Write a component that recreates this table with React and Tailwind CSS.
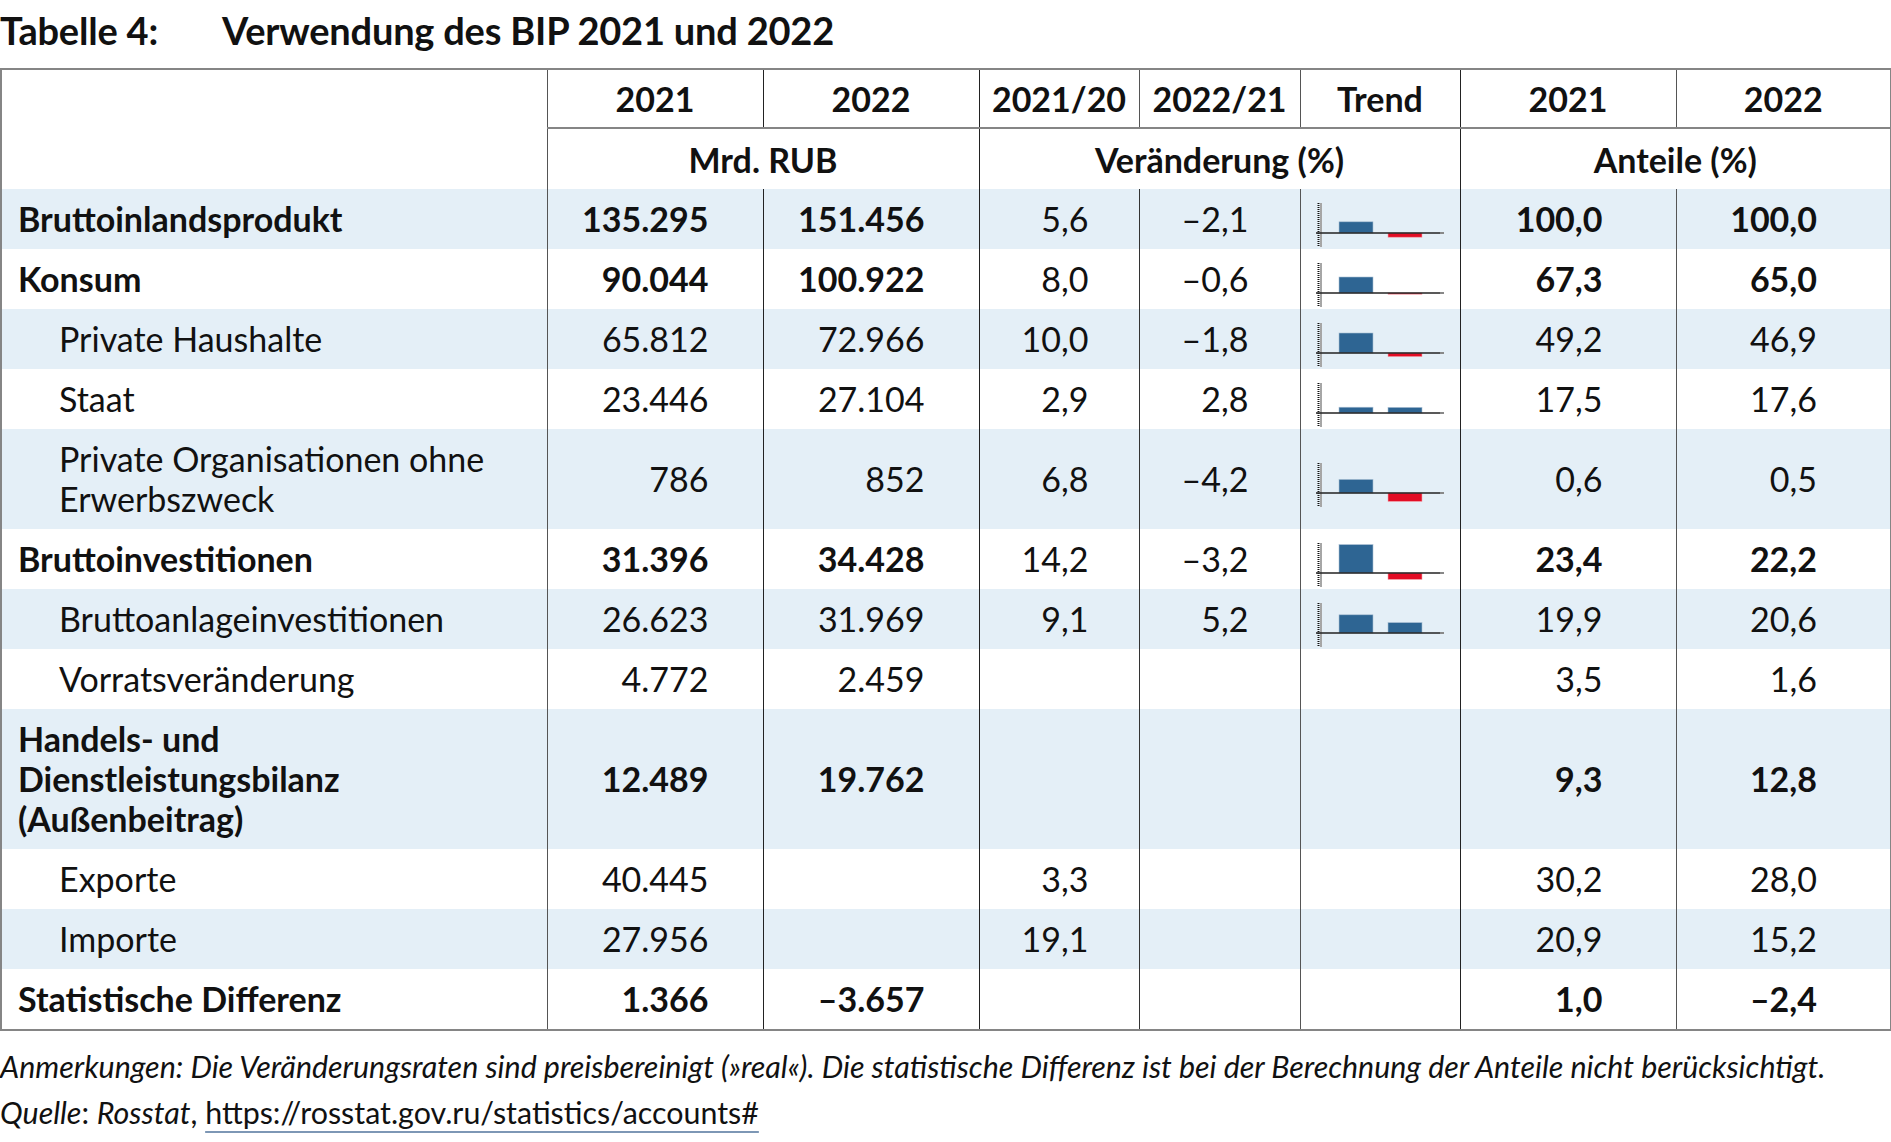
import React from "react";

const rows = [
  { label: "Bruttoinlandsprodukt", bold: true, shade: true, a: "135.295", b: "151.456", v1: "5,6", v2: "–2,1", t: [5.6, -2.1], s1: "100,0", s2: "100,0" },
  { label: "Konsum", bold: true, a: "90.044", b: "100.922", v1: "8,0", v2: "–0,6", t: [8.0, -0.6], s1: "67,3", s2: "65,0" },
  { label: "Private Haushalte", shade: true, a: "65.812", b: "72.966", v1: "10,0", v2: "–1,8", t: [10.0, -1.8], s1: "49,2", s2: "46,9" },
  { label: "Staat", a: "23.446", b: "27.104", v1: "2,9", v2: "2,8", t: [2.9, 2.8], s1: "17,5", s2: "17,6" },
  { label: ["Private Organisationen ohne", "Erwerbszweck"], shade: true, a: "786", b: "852", v1: "6,8", v2: "–4,2", t: [6.8, -4.2], s1: "0,6", s2: "0,5" },
  { label: "Bruttoinvestitionen", bold: true, a: "31.396", b: "34.428", v1: "14,2", v2: "–3,2", t: [14.2, -3.2], s1: "23,4", s2: "22,2" },
  { label: "Bruttoanlageinvestitionen", shade: true, a: "26.623", b: "31.969", v1: "9,1", v2: "5,2", t: [9.1, 5.2], s1: "19,9", s2: "20,6" },
  { label: "Vorratsveränderung", a: "4.772", b: "2.459", s1: "3,5", s2: "1,6" },
  { label: ["Handels- und", "Dienstleistungsbilanz", "(Außenbeitrag)"], bold: true, shade: true, a: "12.489", b: "19.762", s1: "9,3", s2: "12,8" },
  { label: "Exporte", a: "40.445", v1: "3,3", s1: "30,2", s2: "28,0" },
  { label: "Importe", shade: true, a: "27.956", v1: "19,1", s1: "20,9", s2: "15,2" },
  { label: "Statistische Differenz", bold: true, a: "1.366", b: "–3.657", s1: "1,0", s2: "–2,4" },
];

// small bar chart in the "Trend" column, 2px per percent
function Trend({ t }) {
  const base = 44;
  const bar = (x, v) =>
    v >= 0 ? (
      <rect x={x} y={base - v * 2} width="34" height={v * 2} fill="#2e6593" stroke="#a9bfd3" strokeWidth="0.6" />
    ) : (
      <rect x={x} y={base} width="34" height={-v * 2} fill="#e30d25" stroke="#f2a3ab" strokeWidth="0.6" />
    );
  return (
    <svg width="160" height="60" viewBox="0 0 160 60" className="block">
      <rect x="19" y="14" width="2" height="44" fill="#a6a6a6" />
      <line x1="17.5" y1="14" x2="17.5" y2="58" stroke="#111" strokeWidth="2" strokeDasharray="1 1" />
      {bar(38, t[0])}
      {bar(87, t[1])}
      <line x1="15" y1={base} x2="143" y2={base} stroke="#222" strokeWidth="1.5" />
      <line x1="139" y1={base} x2="143" y2={base} stroke="#888" strokeWidth="2" />
    </svg>
  );
}

export default function App() {
  const num = "text-right align-middle py-[10px] leading-[40px]";
  return (
    <div className="w-[1891px] bg-white text-[#111] font-['Lato',sans-serif]">
      <h1 className="h-[60px] leading-[60px] text-[38px] font-bold tracking-[-0.2px]">
        <span className="inline-block w-[222px]">Tabelle 4:</span>
        Verwendung des BIP 2021 und 2022
      </h1>

      <table className="mt-[8px] w-[1890px] table-fixed border-collapse text-[34px] border-t-2 border-b-2 border-l-2 border-r-2 border-[#858585]">
        <colgroup>
          <col className="w-[546px]" />
          <col className="w-[216px]" />
          <col className="w-[216px]" />
          <col className="w-[160px]" />
          <col className="w-[161px]" />
          <col className="w-[160px]" />
          <col className="w-[216px]" />
          <col className="w-[215px]" />
        </colgroup>
        <thead>
          <tr className="h-[59px] font-bold">
            <th rowSpan={2} className="border-r border-[#555]"></th>
            <th className="border-r border-b-2 border-b-[#858585] border-r-[#222] text-center">2021</th>
            <th className="border-r border-b-2 border-b-[#858585] border-r-[#222] text-center">2022</th>
            <th className="border-r border-b-2 border-b-[#858585] border-r-[#555] text-center">2021/20</th>
            <th className="border-r border-b-2 border-b-[#858585] border-r-[#555] text-center">2022/21</th>
            <th className="border-r border-b-2 border-b-[#858585] border-r-[#222] text-center">Trend</th>
            <th className="border-r border-b-2 border-b-[#858585] border-r-[#555] text-center">2021</th>
            <th className="border-b-2 border-b-[#858585] text-center">2022</th>
          </tr>
          <tr className="h-[61px] font-bold">
            <th colSpan={2} className="border-r border-[#222] text-center">Mrd. RUB</th>
            <th colSpan={3} className="border-r border-[#222] text-center">Veränderung (%)</th>
            <th colSpan={2} className="text-center">Anteile (%)</th>
          </tr>
        </thead>
        <tbody>
          {rows.map((r, i) => (
            <tr key={i} className={r.shade ? "bg-[#e4eff7]" : "bg-white"}>
              <td className={`py-[10px] leading-[40px] align-middle border-r border-[#555] ${r.bold ? "font-bold pl-[16px]" : "pl-[57px]"}`}>
                {Array.isArray(r.label)
                  ? r.label.map((l, j) => <div key={j}>{l}</div>)
                  : r.label}
              </td>
              <td className={`${num} pr-[54px] border-r border-[#222] ${r.bold ? "font-bold" : ""}`}>{r.a}</td>
              <td className={`${num} pr-[54px] border-r border-[#222] ${r.bold ? "font-bold" : ""}`}>{r.b}</td>
              <td className={`${num} pr-[50px] border-r border-[#333]`}>{r.v1}</td>
              <td className={`${num} pr-[51px] border-r border-[#555]`}>{r.v2}</td>
              <td className="align-middle p-0 border-r border-[#222]">
                {r.t && <Trend t={r.t} />}
              </td>
              <td className={`${num} pr-[73px] border-r border-[#555] ${r.bold ? "font-bold" : ""}`}>{r.s1}</td>
              <td className={`${num} pr-[73px] ${r.bold ? "font-bold" : ""}`}>{r.s2}</td>
            </tr>
          ))}
        </tbody>
      </table>

      <div className="mt-[12px] text-[30.4px] leading-[46px]">
        <p className="italic">
          Anmerkungen: Die Veränderungsraten sind preisbereinigt (»real«). Die statistische Differenz ist bei der Berechnung der Anteile nicht berücksichtigt.
        </p>
        <p>
          <span className="italic">Quelle</span>: <span className="italic">Rosstat</span>,{" "}
          <a href="#" className="underline decoration-[#7d97b5] decoration-[1.5px] underline-offset-[7px]">
            https://rosstat.gov.ru/statistics/accounts#
          </a>
        </p>
      </div>
    </div>
  );
}
